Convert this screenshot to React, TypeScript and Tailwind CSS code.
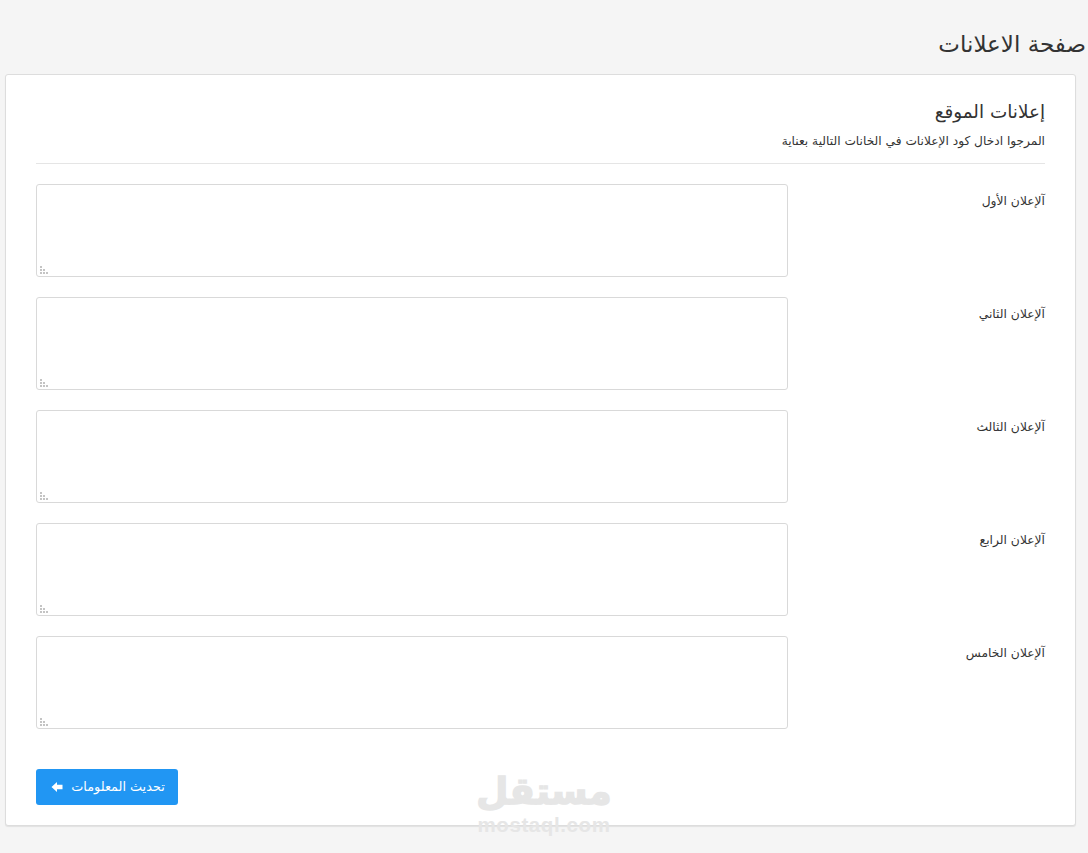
const ads = ["آلإعلان الأول", "آلإعلان الثاني", "آلإعلان الثالث", "آلإعلان الرابع", "آلإعلان الخامس"];

function ResizeGrip() {
  return (
    <svg className="pointer-events-none absolute bottom-[3px] left-[4px]" width="9" height="8" viewBox="0 0 9 8" fill="#c4c4c4">
      <rect x="0" y="0" width="2" height="2" />
      <rect x="0" y="3" width="2" height="2" />
      <rect x="3" y="3" width="2" height="2" />
      <rect x="0" y="6" width="2" height="2" />
      <rect x="3" y="6" width="2" height="2" />
      <rect x="6" y="6" width="2" height="2" />
    </svg>
  );
}

export default function App() {
  return (
    <div dir="rtl" className="relative h-[853px] overflow-hidden bg-[#f5f5f5] font-['DejaVu_Sans','Noto_Sans',sans-serif] text-[#333]">
      <h1 className="pt-[28px] pr-[2px] text-[23px] leading-[32px] font-normal">صفحة الاعلانات</h1>

      <div className="mt-[14px] mr-[12px] ml-[5px] h-[752px] rounded-[3px] border border-[#ddd] bg-white px-[30px] pt-[23px] shadow-[0_1px_1px_rgba(0,0,0,0.08)]">
        <h2 className="text-[18.4px] leading-[28px] font-normal">إعلانات الموقع</h2>
        <p className="mt-[5px] text-[12.2px] leading-[20px]">المرجوا ادخال كود الإعلانات في الخانات التالية بعناية</p>
        <hr className="mt-[12px] border-[#e5e5e5]" />

        <div className="mt-[20px] flex flex-col gap-[20px]">
          {ads.map((label) => (
            <div key={label} className="flex h-[93px] items-start justify-between">
              <label className="pt-[7px] text-[12.3px] leading-[20px]">{label}</label>
              <div className="relative h-[93px] w-[752px]">
                <textarea className="block h-full w-full resize-none rounded-[3px] border border-[#d9d9d9] bg-white outline-none" />
                <ResizeGrip />
              </div>
            </div>
          ))}
        </div>

        <button className="mt-[40px] mr-auto flex h-[36px] w-[142px] items-center justify-center gap-[8px] rounded-[3px] bg-[#2196f3] pl-[2px] text-[12.8px] text-white">
          <span>تحديث المعلومات</span>
          <svg width="12" height="12" viewBox="0 0 12 12" fill="white">
            <path d="M0.5 6 L6 1 V3.8 H11.5 V8.2 H6 V11 Z" />
          </svg>
        </button>
      </div>

      <div className="absolute top-[770px] left-[476px] flex w-[136px] flex-col items-center text-[#e6e6e6] select-none">
        <span className="text-[37px] leading-[44px] font-bold [-webkit-text-stroke:1.5px_#e6e6e6]">مستقل</span>
        <span dir="ltr" className="mt-[1px] font-['Liberation_Sans',sans-serif] text-[20.5px] leading-[20px] font-bold tracking-[0.6px]">mostaql.com</span>
      </div>
    </div>
  );
}
